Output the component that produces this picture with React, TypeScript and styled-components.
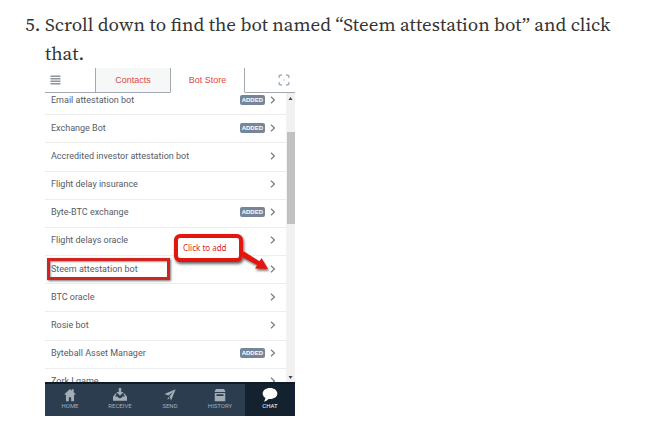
import React from "react";
import styled, { createGlobalStyle } from "styled-components";

const GlobalStyle = createGlobalStyle`
  * { box-sizing: border-box; }
  body { margin: 0; background: #fff; }
  button { appearance: none; border: 0; margin: 0; padding: 0; background: none; font: inherit; color: inherit; cursor: pointer; }
`;

const Article = styled.main`
  padding: 10px 24px 10px 45px;
`;

const Steps = styled.ol`
  margin: 0;
  padding: 0;
  color: #333;
  font: 19px/29px "Source Serif 4", "Liberation Serif", serif;
`;

const Step = styled.li`
  padding: 0;
`;

const Instruction = styled.p`
  margin: 0;
`;

const Phone = styled.section`
  display: flex;
  flex-direction: column;
  position: relative;
  max-width: 250px;
  background: #fff;
  color: #555c66;
  font: 9px/12px Roboto, sans-serif;
`;

const Header = styled.header`
  display: grid;
  grid-template-columns: 2fr 3fr 3fr 2fr;
  height: 25px;
`;

const IconButton = styled.button<{ $end?: boolean }>`
  display: flex;
  align-items: center;
  justify-content: ${(p) => (p.$end ? "flex-end" : "flex-start")};
  padding: 0 5px;
  border-bottom: 1px solid #a3a7b0;
`;

const Tab = styled.button<{ $active?: boolean }>`
  color: #e0473f;
  font-family: "Liberation Sans", sans-serif;
  background: ${(p) => (p.$active ? "#fff" : "#f6f7f7")};
  border-left: 1px solid #a3a7b0;
  border-right: ${(p) => (p.$active ? "1px solid #a3a7b0" : "0")};
  border-bottom: 1px solid ${(p) => (p.$active ? "#fff" : "#a3a7b0")};
`;

const Viewport = styled.div`
  display: flex;
  height: 289px;
  overflow: hidden;
`;

const BotList = styled.ul`
  flex: 1;
  display: grid;
  grid-template-rows: repeat(11, 1fr);
  height: 310px;
  margin: -6px 0 0;
  padding: 0;
  list-style: none;
`;

const BotItem = styled.li`
  display: flex;
  border-bottom: 1px solid #ededed;
`;

const BotButton = styled.button`
  flex: 1;
  display: flex;
  align-items: center;
  gap: 4px;
  padding: 0 9px 2px 6px;
  text-align: left;
`;

const BotName = styled.span`
  flex: 1;
  white-space: nowrap;
`;

const Badge = styled.span`
  padding: 0 2px;
  border-radius: 2px;
  background: #75869a;
  color: #fff;
  font: bold 6px/10px "Liberation Sans", sans-serif;
`;

const Scrollbar = styled.div`
  display: flex;
  flex-direction: column;
  align-items: center;
  width: 9px;
  background: #f1f1f1;
`;

const ScrollArrow = styled.svg`
  width: 9px;
  height: 10px;
  flex: none;
`;

const Track = styled.div`
  flex: 1;
  width: 8px;
  padding-top: 29px;
`;

const Thumb = styled.div`
  height: 92px;
  background: #c1c1c1;
`;

const BottomNav = styled.nav`
  display: grid;
  grid-template-columns: repeat(5, 1fr);
  height: 34px;
  border-top: 2px solid #101b28;
  background: #2c3d50;
`;

const NavButton = styled.button<{ $active?: boolean }>`
  display: flex;
  flex-direction: column;
  align-items: center;
  padding-top: 4px;
  color: ${(p) => (p.$active ? "#fff" : "#a3adb6")};
  background: ${(p) => (p.$active ? "#14212f" : "transparent")};
  font-size: 6px;
  line-height: 8px;
`;

const Highlight = styled.div`
  position: absolute;
  left: 2px;
  top: 190px;
  width: 123px;
  height: 22px;
  border: 3px solid #cf2420;
  box-shadow: 1px 1px 2px #777, inset 1px 1px 2px #999;
`;

const Callout = styled.div`
  position: absolute;
  left: 129px;
  top: 166px;
  width: 69px;
  height: 28px;
  border: 4px solid #e4150f;
  border-radius: 6px;
  background: #fff;
  box-shadow: 1px 2px 3px #666;
  color: #dd1c1c;
  font: 8px/19px "Noto Sans", sans-serif;
  padding-left: 5px;
`;

const Pointer = styled.svg`
  position: absolute;
  left: 195px;
  top: 183px;
  filter: drop-shadow(1px 2px 1px #777);
`;

const bots = [
  { name: "Email attestation bot", added: true },
  { name: "Exchange Bot", added: true },
  { name: "Accredited investor attestation bot" },
  { name: "Flight delay insurance" },
  { name: "Byte-BTC exchange", added: true },
  { name: "Flight delays oracle" },
  { name: "Steem attestation bot" },
  { name: "BTC oracle" },
  { name: "Rosie bot" },
  { name: "Byteball Asset Manager", added: true },
  { name: "Zork I game" },
];

const Chevron = () => (
  <svg width="8" height="10" viewBox="0 0 8 10" fill="none" stroke="#777d85" strokeWidth="1.2">
    <path d="M2 1.8l3.4 3.2L2 8.2" />
  </svg>
);

const navItems = [
  {
    label: "HOME",
    icon: <path d="M1.5 7L8 1.2l2 1.8V1.4h2.2v3.5L14.5 7l-1 .9-.9-.7V15H9.3v-4.5H6.7V15H3.4V7.2l-.9.7z" />,
  },
  {
    label: "RECEIVE",
    icon: <path d="M6.6 0h2.8v4.5h2.7L8 8.8 3.9 4.5h2.7zM2.8 6.2h1.5L2.4 9.8h2.9c.2 1.2 1.2 1.8 2.7 1.8s2.5-.6 2.7-1.8h2.9l-1.9-3.6h1.5L16 10v4.6H0V10z" />,
  },
  {
    label: "SEND",
    icon: <path d="M14.5 1.5L9.2 14.3 7.4 9.8l4-5.2-5.2 4-4.5-1.8zM6.4 10.2l.9 2.2-2.6.6z" />,
  },
  {
    label: "HISTORY",
    icon: <path fillRule="evenodd" d="M3.5 1.2h9L14 3.5v1H2v-1zM2 5.7h12V15H2zM4 7.2v2h8v-2z" />,
  },
  {
    label: "CHAT",
    icon: <path d="M8 0c4.8 0 8.4 2.8 8.4 6.4s-3.6 6.3-8.4 6.3l-1.7-.1C4.8 14.2 3 15.3 1 15.4c1-1 1.7-2.4 1.7-3.9C.8 10.3-.4 8.5-.4 6.4-.4 2.8 3.2 0 8 0z" />,
  },
];

export default function App() {
  return (
    <>
      <GlobalStyle />
      <Article>
        <Steps start={5}>
          <Step>
            <Instruction>
              Scroll down to find the bot named “Steem attestation bot” and click that.
            </Instruction>
            <Phone aria-label="Bot store">
              <Header>
                <IconButton aria-label="Menu">
                  <svg width="11" height="10" viewBox="0 0 11 10" stroke="#8f949b" strokeWidth="1.5">
                    <path d="M0.5 1.2h10M0.5 3.7h10M0.5 6.2h10M0.5 8.7h10" />
                  </svg>
                </IconButton>
                <Tab>Contacts</Tab>
                <Tab $active>Bot Store</Tab>
                <IconButton $end aria-label="Scan code">
                  <svg width="12" height="12" viewBox="0 0 11 11" fill="none" stroke="#8f9aa5">
                    <path d="M1 3.6V2.2Q1 1 2.2 1h1.4M7.4 1h1.4Q10 1 10 2.2v1.4M10 7.4v1.4Q10 10 8.8 10H7.4M3.6 10H2.2Q1 10 1 8.8V7.4" />
                    <path d="M5.5 5v1M5 5.5h1" />
                  </svg>
                </IconButton>
              </Header>
              <Viewport>
                <BotList>
                  {bots.map((bot) => (
                    <BotItem key={bot.name}>
                      <BotButton>
                        <BotName>{bot.name}</BotName>
                        {bot.added && <Badge>ADDED</Badge>}
                        <Chevron />
                      </BotButton>
                    </BotItem>
                  ))}
                </BotList>
                <Scrollbar aria-hidden>
                  <ScrollArrow viewBox="0 0 9 10"><path d="M2.5 7h4l-2-3z" fill="#444" /></ScrollArrow>
                  <Track><Thumb /></Track>
                  <ScrollArrow viewBox="0 0 9 10"><path d="M2.5 4h4l-2 3z" fill="#444" /></ScrollArrow>
                </Scrollbar>
              </Viewport>
              <BottomNav>
                {navItems.map(({ label, icon }) => (
                  <NavButton key={label} $active={label === "CHAT"}>
                    <svg width="16" height="14" viewBox="-1 0 18 16" fill="currentColor">{icon}</svg>
                    {label}
                  </NavButton>
                ))}
              </BottomNav>
              <Highlight />
              <Callout>Click to add</Callout>
              <Pointer width="30" height="24" viewBox="0 0 30 24">
                <path d="M1 2.5L4 .5l15.5 9.8L21.5 7l6.5 11-13-.5 2.3-3.5L1 5.5z" fill="#e4150f" />
              </Pointer>
            </Phone>
          </Step>
        </Steps>
      </Article>
    </>
  );
}
